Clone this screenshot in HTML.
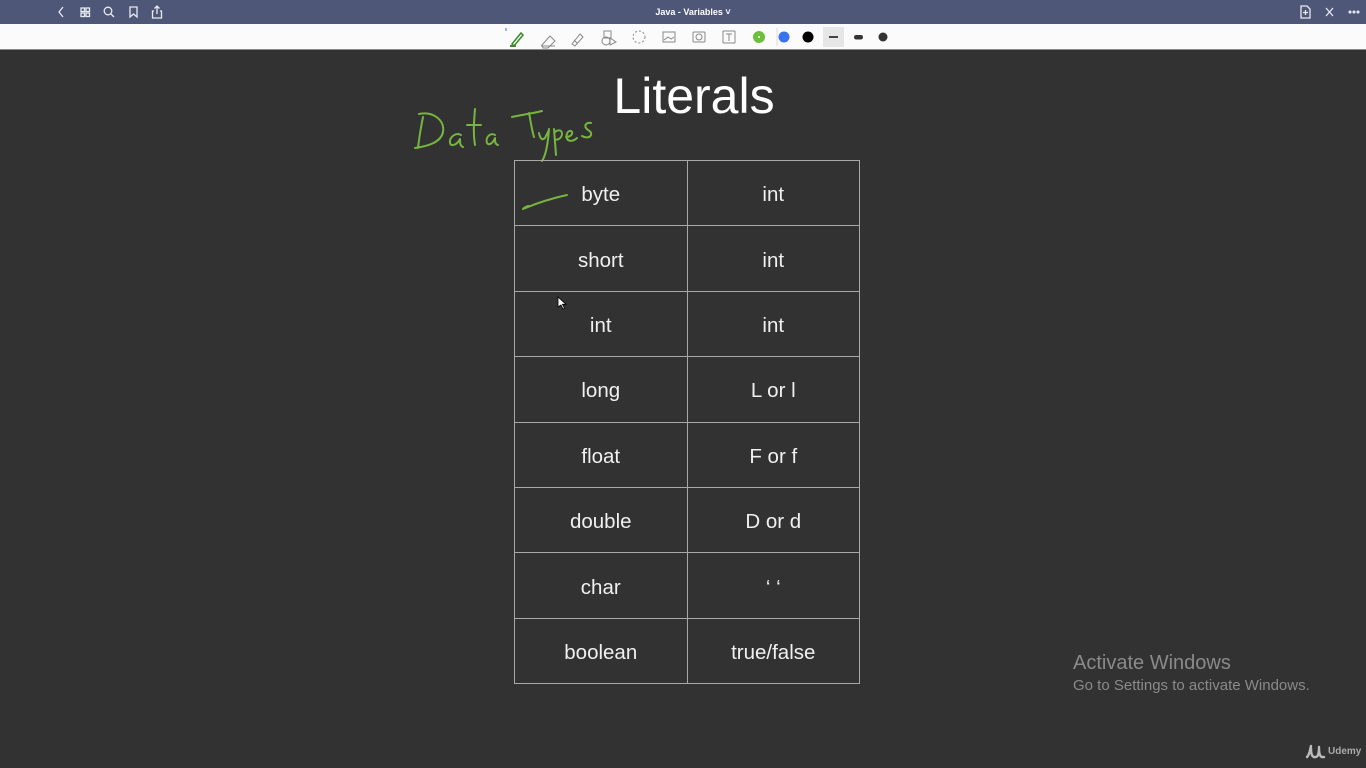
<!DOCTYPE html>
<html><head><meta charset="utf-8"><style>
*{margin:0;padding:0;box-sizing:border-box}
body{width:1366px;height:768px;background:#323232;font-family:"Liberation Sans",sans-serif;position:relative;overflow:hidden}
.top{position:absolute;left:0;top:0;width:1366px;height:24px;background:#4e5777}
.tool{position:absolute;left:0;top:24px;width:1366px;height:26px;background:#fbfbfb;border-bottom:1px solid #888}
.title{position:absolute;top:7px;left:0;width:1386px;text-align:center;color:#fff;font-size:9px;font-weight:bold}
svg{position:absolute}
.lit{position:absolute;left:594px;top:67px;width:200px;text-align:center;color:#fff;font-size:50px}
table{position:absolute;left:514px;top:160px;border-collapse:collapse;table-layout:fixed;width:345px}
td{border:1px solid #a8a8a8;width:172.5px;height:65.4px;text-align:center;color:#f0f0f0;font-size:20.5px;padding-top:4px}
.aw{position:absolute;left:1073px;top:652px;color:#8a8a8a;font-size:20px}
.aw2{position:absolute;left:1073px;top:677px;color:#8a8a8a;font-size:15px}
.ud{position:absolute;left:1328px;top:746px;color:#aaa;font-size:10px;font-weight:bold}
</style></head><body>
<div class="top"></div>
<div class="title">Java - Variables ˅</div>
<svg width="170" height="24" style="left:50px;top:0" fill="none" stroke="#e8eaf2" stroke-width="1.3">
<path d="M13 7l-4 5 4 5"/>
<rect x="31" y="8" width="3.5" height="3.5"/><rect x="36" y="8" width="3.5" height="3.5"/><rect x="31" y="13" width="3.5" height="3.5"/><rect x="36" y="13" width="3.5" height="3.5"/>
<circle cx="58" cy="11" r="3.8"/><path d="M61 14l3 3"/>
<path d="M80 7h7v10l-3.5-3-3.5 3z"/>
<path d="M104 11h-1.5v7h9v-7h-1.5M107 14V6M104.5 8.5l2.5-2.5 2.5 2.5"/>
</svg>
<svg width="70" height="24" style="left:1296px;top:0" fill="none" stroke="#e8eaf2" stroke-width="1.3">
<path d="M5 6h6l3 3v9H5zM9.5 10v5M7 12.5h5"/>
<path d="M30 8l7 8M37 8l-7 8"/>
<circle cx="54" cy="12" r=".9" fill="#e8eaf2"/><circle cx="58" cy="12" r=".9" fill="#e8eaf2"/><circle cx="62" cy="12" r=".9" fill="#e8eaf2"/>
</svg>
<div class="tool"></div>
<svg width="420" height="26" style="left:490px;top:24px" fill="none" stroke="#888" stroke-width="1">
<path d="M16 4v3" stroke="#3b6fe0"/>
<path d="M22 20l9-11 2 2-9 11z" stroke="#3a8a2a" stroke-width="1.5"/><path d="M20 22h6" stroke="#3a8a2a" stroke-width="2"/>
<path d="M52 21l8-9 5 5-7 7h-5zM51 22h14"/>
<path d="M82 20l8-10 3 3-8 9zM84 16l3 3"/>
<rect x="114" y="7" width="7" height="7"/><circle cx="116" cy="17" r="4"/><path d="M120 14l6 4-6 3z"/>
<circle cx="149" cy="13" r="6" stroke-dasharray="2 2"/>
<rect x="173" y="8" width="12" height="10"/><path d="M174 16l4-3 3 2 3-2"/>
<rect x="203" y="8" width="12" height="10" rx="1"/><circle cx="209" cy="13" r="3"/>
<path d="M233 7h12M233 19h12M233 7v12M245 7v12M236 10h6M239 10v7"/>
<line x1="287" y1="4" x2="287" y2="22" stroke="#ddd"/>
<circle cx="269" cy="13" r="6" fill="#6cbf3a" stroke="none"/><circle cx="269" cy="13" r="1" fill="#fff" stroke="none"/>
<circle cx="294" cy="13" r="5.5" fill="#3a72ee" stroke="none"/>
<circle cx="318" cy="13" r="5.5" fill="#000" stroke="none"/>
<rect x="333" y="3" width="21" height="20" fill="#e6e6e6" stroke="none"/>
<path d="M339 13h9" stroke="#333" stroke-width="1.8"/>
<rect x="364" y="11" width="9" height="4.5" rx="2.2" fill="#333" stroke="none"/>
<circle cx="393" cy="13" r="4.5" fill="#333" stroke="none"/>
</svg>
<div class="lit">Literals</div>
<svg width="200" height="120" style="left:405px;top:95px" fill="none" stroke="#76b53f" stroke-width="2" stroke-linecap="round" stroke-linejoin="round">
<path d="M18 22c-2 10-4 22-5 31M14 19c14-3 26 6 24 18-2 10-14 14-28 16"/>
<path d="M56 40c-5-3-12 2-11 8 1 4 7 2 10-4 0 4 0 7 3 8"/>
<path d="M70 14c-1 12-2 24 0 36M62 30h14"/>
<path d="M90 40c-5-3-10 3-8 8 2 3 6 0 8-5 0 4 0 6 3 7"/>
<path d="M107 22c8-2 18-3 30-6M124 18c2 10 3 18 5 24"/>
<path d="M134 38c1 5 3 8 6 5l4-8M144 34c-1 14-3 26-7 32"/>
<path d="M149 34l2 26M150 37c5-4 9 0 6 5-2 3-5 3-6 2"/>
<path d="M161 42c5 0 8-4 5-6-4-1-6 6-3 9 3 2 7 0 9-2"/>
<path d="M186 28c-4-1-7 2-5 5s6 3 5 7c-1 3-6 3-9 1"/>
</svg>
<svg width="60" height="30" style="left:515px;top:185px" fill="none" stroke="#76b53f" stroke-width="2" stroke-linecap="round">
<path d="M52 10c-14 3-30 8-44 14M8 24c2-2 4-3 6-3"/>
</svg>
<table>
<tr><td>byte</td><td>int</td></tr>
<tr><td>short</td><td>int</td></tr>
<tr><td>int</td><td>int</td></tr>
<tr><td>long</td><td>L or l</td></tr>
<tr><td>float</td><td>F or f</td></tr>
<tr><td>double</td><td>D or d</td></tr>
<tr><td>char</td><td>‘ ‘</td></tr>
<tr><td>boolean</td><td>true/false</td></tr>
</table>
<svg width="12" height="14" style="left:557px;top:296px"><path d="M1 1v10l3-2 2 4 1.5-.7-2-4h3.5z" fill="#fff" stroke="#000" stroke-width=".8"/></svg>
<div class="aw">Activate Windows</div>
<div class="aw2">Go to Settings to activate Windows.</div>
<svg width="22" height="16" style="left:1305px;top:744px" fill="none" stroke="#bbb" stroke-width="2.4" stroke-linecap="round"><path d="M2 13c3-3 3-8 4-11M6 4c0 6 1 10 5 9 3-1 3-6 3-10M14 4c0 6 1 10 5 9"/></svg>
<div class="ud">Udemy</div>
</body></html>
